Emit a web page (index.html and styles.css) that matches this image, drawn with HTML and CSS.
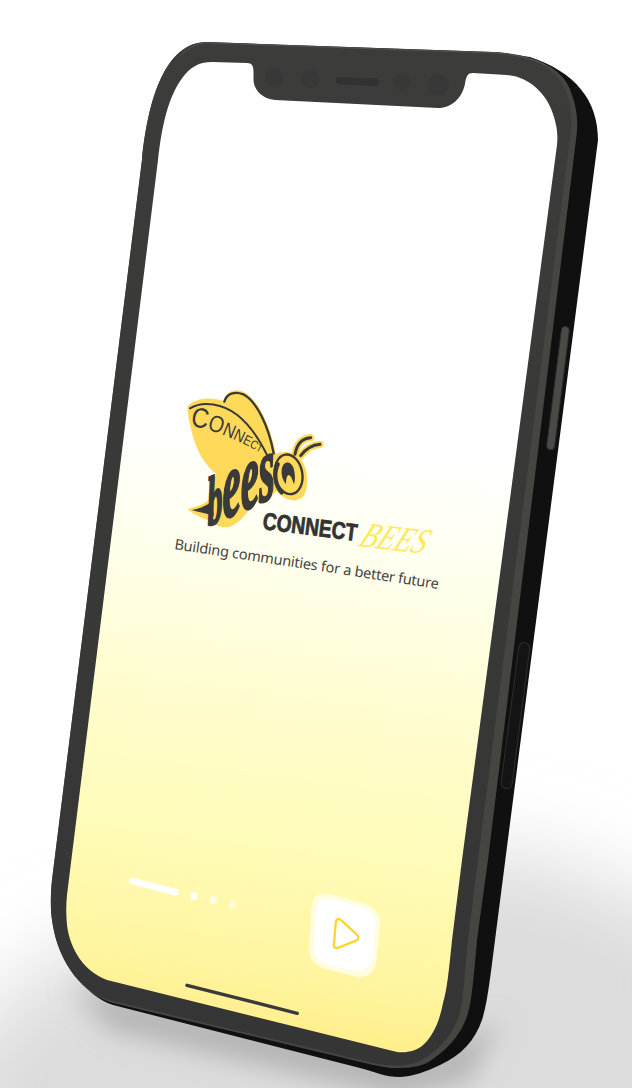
FILE: index.html
```html
<!DOCTYPE html>
<html lang="en">
<head>
<meta charset="utf-8">
<title>ConnectBees</title>
<link rel="stylesheet" href="styles.css">
</head>
<body>
<svg class="canvas" width="632" height="1088" viewBox="0 0 632 1088" xmlns="http://www.w3.org/2000/svg">
  <defs>
    <linearGradient id="screenFill" gradientUnits="userSpaceOnUse" x1="322" y1="440" x2="240" y2="1055">
      <stop offset="0" stop-color="#ffffff"/>
      <stop offset="0.17" stop-color="#fffff0"/>
      <stop offset="0.42" stop-color="#fffdd0"/>
      <stop offset="0.68" stop-color="#fffbb6"/>
      <stop offset="0.86" stop-color="#fff5a0"/>
      <stop offset="1" stop-color="#ffec82"/>
    </linearGradient>
    <linearGradient id="bezelFill" gradientUnits="userSpaceOnUse" x1="300" y1="40" x2="300" y2="1070">
      <stop offset="0" stop-color="#3c3c3b"/>
      <stop offset="1" stop-color="#353535"/>
    </linearGradient>
    <filter id="blurWide" x="-30%" y="-30%" width="160%" height="160%"><feGaussianBlur stdDeviation="42"/></filter>
    <filter id="blurNear" x="-30%" y="-30%" width="160%" height="160%"><feGaussianBlur stdDeviation="13"/></filter>
  </defs>

  <!-- ground shadow -->
  <path class="shadow-wide" filter="url(#blurWide)" d="M-60 1060 L60 950 L520 850 L720 930 L720 1180 L-60 1180Z"/>
  <path class="shadow-near" filter="url(#blurNear)" d="M70 985 L420 1060 L500 1020 L470 1080 L400 1098 L110 1030Z"/>

  <!-- phone body -->
  <path class="side" d="M493 52 L530 57 C575 72 598 100 598 140 L495 940 C490 980 487 1005 482 1020 C475 1040 462 1055 440 1065 C425 1072 415 1076 400 1077 C385 1077 375 1072 360 1068 L113 1005 C88 997 60 965 54 920 L200 400Z"/>
  <path class="band" d="M207 42 L493 52 C535 54 565 68 572 95 C578 112 578 125 576 140 L488 860 L477 940 C474 975 472 1000 468 1013 C462 1035 445 1052 427 1063 C415 1068 405 1068 390 1068 L373 1065 L113 1003 C85 995 58 965 52 920 C50 905 51 890 52 880 L142 160 C148 100 165 42 207 42Z"/>
  <path fill="url(#bezelFill)" d="M207 42 L493 52 C538 55 564 72 570 105 C572 118 572 128 570 140 L478 860 L468 940 C465 975 463 1000 460 1012 C455 1032 440 1050 422 1060 C410 1066 400 1066 385 1065 L373 1063 L113 1001 C85 995 58 965 52 920 C50 905 51 890 52 880 L142 160 C148 100 165 42 207 42Z"/>
  <path class="rim" d="M180 56 C190 46 198 43 207 43 L493 53 C515 54 530 58 545 65"/>

  <!-- side buttons -->
  <rect class="btn-top" x="554" y="326" width="8" height="124" rx="4" transform="rotate(7.2 557 388)"/>
  <rect class="btn-low" x="510" y="642" width="11" height="147" rx="5.500" transform="rotate(7.4 515 715)"/>

  <!-- screen with notch -->
  <path fill="url(#screenFill)" d="M158 160 C162 125 168 97 183 77 C190 68 198 62 212 62 L247 63 C252 63 253.500 66 253.500 72 L253.500 80 C254 90 262 99 275 100 L438 108 C452 108 462 98 465 84 C466 76 468 73 473 73 L507 75 C530 77 548 95 554 117 C557 127 558 135 557 145 L462 860 L452 940 C449 970 447 990 443 1003 C440 1020 433 1037 422 1046 C415 1051 408 1053 397 1052 L107 980 C85 972 70 950 67 925 C66 915 66 905 67 895Z"/>

  <!-- notch details -->
  <circle class="cam" cx="274" cy="78" r="9"/>
  <circle class="cam" cx="310" cy="79" r="9"/>
  <circle class="cam" cx="402" cy="82" r="8.500"/>
  <circle class="cam" cx="438" cy="85" r="10.500"/>
  <rect class="speaker" x="335" y="77" width="45" height="9" rx="4.500" transform="rotate(2.500 357 81)"/>

  <!-- bee logo -->
  <g transform="translate(180 385) scale(0.3333)">
    <path class="bee-glow" d="M345 208 C350 180 365 160 392 158 M362 212 C375 195 395 180 420 178"/>
    <path class="bee-body" d="M22 65 C45 38 95 35 130 48 C137 22 160 10 185 18 C230 35 270 115 288 208 C305 196 345 198 362 222 C386 250 388 312 368 337 C345 356 310 344 290 318 C270 338 245 348 225 352 C205 378 185 408 160 420 C140 432 115 428 95 410 C70 400 45 392 22 372 C50 365 70 360 85 345 C85 320 95 290 110 268 C75 240 50 200 35 140 C28 110 22 85 22 65Z"/>
    <path class="bee-line-thin" d="M30 70 C70 45 130 58 172 90 C212 122 242 170 262 212"/>
    <path class="bee-line" d="M133 50 C140 25 165 18 190 28 C230 50 265 120 281 205"/>
    <path class="bee-ant" d="M345 208 C350 180 365 160 392 158 M362 212 C375 195 395 180 420 178"/>
    <path id="wingPath" class="no-paint" d="M30 124 C90 128 190 170 268 220"/>
    <text class="bee-wing-text"><textPath href="#wingPath" textLength="226" lengthAdjust="spacingAndGlyphs"><tspan class="w1">C</tspan><tspan class="w2">O</tspan><tspan class="w3">N</tspan><tspan class="w4">N</tspan><tspan class="w5">E</tspan><tspan class="w6">C</tspan><tspan class="w7">T</tspan></textPath></text>
    <path class="bee-tail" d="M35 375 C55 372 72 365 96 350 L102 392 C80 385 55 382 35 375Z"/>
    <text class="bee-word" transform="translate(84 424) rotate(-24) skewX(-22) scale(1 2.800)" textLength="222" lengthAdjust="spacingAndGlyphs"><tspan class="bee-b">b</tspan>ees</text>
    <ellipse class="bee-head" cx="326" cy="268" rx="41" ry="60" transform="rotate(-10 326 268)"/>
    <path class="bee-cheek" d="M293 238 C280 265 285 300 305 322"/>
    <path class="bee-eye" d="M305 255 C308 228 332 225 341 250 C346 270 346 285 342 298 C338 285 333 272 327 270 C320 270 318 285 318 298 C308 285 303 270 305 255Z"/>
  </g>

  <!-- wordmark -->
  <text class="word-connect" transform="translate(262 529) rotate(7.2)" textLength="95" lengthAdjust="spacingAndGlyphs">CONNECT</text>
  <text class="word-bees" transform="translate(357 546) rotate(6.500) skewX(-20)" textLength="66" lengthAdjust="spacingAndGlyphs">BEES</text>
  <text class="tagline" transform="translate(174 549) rotate(8.600)" textLength="267">Building communities for a better future</text>

  <!-- pagination, home bar and next button -->
  <g transform="translate(40 860) scale(0.3333)">
    <path class="pill" d="M277 63 L407 97"/>
    <circle class="dot" cx="462" cy="108" r="12"/>
    <circle class="dot dot-b" cx="520" cy="121" r="12"/>
    <circle class="dot dot-c" cx="578" cy="134" r="12"/>
    <path class="home" d="M441 376 L772 460"/>
    <path class="halo" d="M860 100 L970 130 C1005 140 1022 160 1020 195 L1010 300 C1005 340 980 358 940 348 L860 328 C825 318 805 295 807 260 L815 140 C818 112 835 97 860 100Z"/>
    <path class="tile" d="M870 116 L960 140 C995 150 1008 170 1005 200 L998 290 C993 325 970 338 935 330 L870 314 C835 305 818 285 821 250 L829 150 C832 125 848 112 870 116Z"/>
    <path class="play" d="M905 182 C893 172 888 178 887 192 L882 252 C881 265 889 266 898 262 L948 242 C958 237 958 230 950 223Z"/>
  </g>
</svg>
</body>
</html>
```
FILE: styles.css
```css
html, body { margin: 0; padding: 0; background: #ffffff; }
body { width: 632px; height: 1088px; overflow: hidden; }
.canvas { display: block; }

.shadow-wide { fill: #dcdcdc; }
.shadow-near { fill: #b4b4b4; }
.side { fill: #101010; }
.band { fill: #454542; }
.rim { fill: none; stroke: #525250; stroke-width: 1; }
.btn-top { fill: #4a4a47; stroke: #2a2a2a; stroke-width: 1; }
.btn-low { fill: #141414; stroke: #2e2e2e; stroke-width: 1; }
.cam { fill: #383838; }
.speaker { fill: #323232; stroke: #454545; stroke-width: 0.6; }

.bee-glow { fill: none; stroke: #ffd95a; stroke-width: 22; stroke-linecap: round; }
.bee-body { fill: #ffd95a; }
.bee-line { fill: none; stroke: #3a3a3a; stroke-width: 7; stroke-linecap: round; }
.bee-line-thin { fill: none; stroke: #3a3a3a; stroke-width: 6; stroke-linecap: round; }
.bee-ant { fill: none; stroke: #3a3a3a; stroke-width: 9; stroke-linecap: round; }
.no-paint { fill: none; stroke: none; }
.bee-wing-text { font-family: "Liberation Sans", sans-serif; fill: #3a3a3a; }
.w1 { font-size: 84px; }
.w2 { font-size: 70px; }
.w3 { font-size: 58px; }
.w4 { font-size: 50px; }
.w5 { font-size: 42px; }
.w6 { font-size: 36px; }
.w7 { font-size: 30px; }
.bee-word { font-family: "Liberation Serif", serif; font-weight: 700; font-style: italic; font-size: 92px; fill: #3a3a3a; stroke: #3a3a3a; stroke-width: 2.5; }
.bee-b { font-size: 68px; }
.bee-tail { fill: #3a3a3a; }
.bee-head { fill: #ffd95a; stroke: #3a3a3a; stroke-width: 7; }
.bee-cheek { fill: none; stroke: #3a3a3a; stroke-width: 13; stroke-linecap: round; }
.bee-eye { fill: #3a3a3a; }

.word-connect { font-family: "Liberation Sans", sans-serif; font-weight: 700; font-size: 24px; fill: #333333; stroke: #333333; stroke-width: 0.8; }
.word-bees { font-family: "Liberation Serif", serif; font-style: italic; font-size: 36px; fill: #ffe95a; }
.tagline { font-family: "Noto Sans", sans-serif; font-size: 14.5px; fill: #444440; }

.pill { fill: none; stroke: #ffffff; stroke-width: 20; stroke-linecap: round; }
.dot { fill: #ffffff; opacity: 0.85; }
.dot-b { opacity: 0.65; }
.dot-c { opacity: 0.45; }
.home { fill: none; stroke: #3a3a3a; stroke-width: 10; stroke-linecap: round; }
.halo { fill: #fffde0; }
.tile { fill: #ffffff; }
.play { fill: none; stroke: #ffd42e; stroke-width: 7; stroke-linejoin: round; }
```
